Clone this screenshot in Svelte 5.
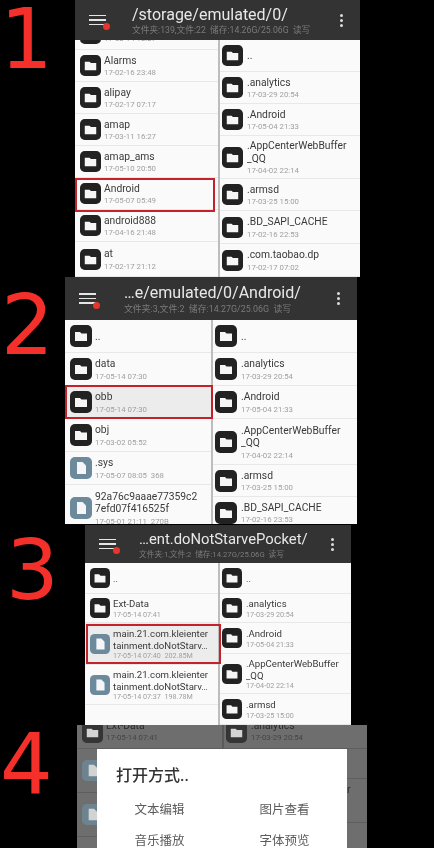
<script>
  const steps = [
    {
      n: 1,
      title: '/storage/emulated/0/',
      sub: '文件夹:139,文件:22  储存:14.26G/25.06G  读写',
      left: [
        { h: 10, name: '', date: '17-03-14 13:37', cut: true },
        { h: 32, name: 'Alarms', date: '17-02-16 23:48' },
        { h: 32, name: 'alipay', date: '17-02-17 07:17' },
        { h: 32, name: 'amap', date: '17-03-11 16:27' },
        { h: 32, name: 'amap_ams', date: '17-05-10 20:50' },
        { h: 32, name: 'Android', date: '17-05-07 05:49', box: true },
        { h: 32, name: 'android888', date: '17-04-16 21:48' },
        { h: 35, name: 'at', date: '17-02-17 21:12' }
      ],
      right: [
        { h: 32, name: '..', date: '' },
        { h: 32, name: '.analytics', date: '17-03-29 20:54' },
        { h: 32, name: '.Android', date: '17-05-04 21:33' },
        { h: 43, name: '.AppCenterWebBuffer\n_QQ', date: '17-04-02 22:14' },
        { h: 32, name: '.armsd', date: '17-03-25 15:00' },
        { h: 33, name: '.BD_SAPI_CACHE', date: '17-02-16 22:53' },
        { h: 33, name: '.com.taobao.dp', date: '17-02-17 07:02' }
      ]
    },
    {
      n: 2,
      title: '…e/emulated/0/Android/',
      sub: '文件夹:3,文件:2  储存:14.27G/25.06G  读写',
      left: [
        { h: 33, name: '..', date: '' },
        { h: 33, name: 'data', date: '17-05-14 07:30' },
        { h: 33, name: 'obb', date: '17-05-14 07:30', box: true, on: true },
        { h: 33, name: 'obj', date: '17-03-02 05:52' },
        { h: 33, name: '.sys', date: '17-05-07 08:05  368', file: true },
        { h: 46, name: '92a76c9aaae77359c2\n7efd07f416525f', date: '17-05-01 21:11  270B', file: true }
      ],
      right: [
        { h: 33, name: '..', date: '' },
        { h: 33, name: '.analytics', date: '17-03-29 20:54' },
        { h: 33, name: '.Android', date: '17-05-04 21:33' },
        { h: 46, name: '.AppCenterWebBuffer\n_QQ', date: '17-04-02 22:14' },
        { h: 32, name: '.armsd', date: '17-03-25 15:00' },
        { h: 32, name: '.BD_SAPI_CACHE', date: '17-02-16 23:53' }
      ]
    },
    {
      n: 3,
      title: '…ent.doNotStarvePocket/',
      sub: '文件夹:1,文件:2  储存:14.27G/25.06G  读写',
      left: [
        { h: 31, name: '..', date: '' },
        { h: 29, name: 'Ext-Data', date: '17-05-14 07:41' },
        { h: 42, name: 'main.21.com.kleienter\ntainment.doNotStarv…', date: '17-05-14 07:40  202.85M', file: true, box: true, on: true },
        { h: 40, name: 'main.21.com.kleienter\ntainment.doNotStarv…', date: '17-05-14 07:37  198.78M', file: true }
      ],
      right: [
        { h: 31, name: '..', date: '' },
        { h: 29, name: '.analytics', date: '17-03-29 20:54' },
        { h: 31, name: '.Android', date: '17-05-04 21:33' },
        { h: 40, name: '.AppCenterWebBuffer\n_QQ', date: '17-04-02 22:14' },
        { h: 31, name: '.armsd', date: '17-03-25 15:00' }
      ]
    }
  ];

  const behind = {
    left: [
      { h: 24, name: 'Ext-Data', date: '17-05-14 07:41', cut: true },
      { h: 44, name: '', date: '', file: true },
      { h: 44, name: '', date: '', file: true }
    ],
    right: [
      { h: 24, name: '.analytics', date: '17-03-29 20:54', cut: true },
      { h: 30, name: '.Android', date: '17-05-04 21:33' },
      { h: 44, name: '.AppCenterWebBuffer\n_QQ', date: '17-04-02 22:14' }
    ]
  };

  const openers = ['文本编辑', '图片查看', '音乐播放', '字体预览'];
</script>

{#snippet icon(file)}
  <svg class="icon" viewBox="0 0 22 22" aria-hidden="true">
    <rect width="22" height="22" rx="5" fill={file ? '#6d8a9c' : '#222'} />
    {#if file}
      <path d="M7 5h5.500L16 8.500V17H7z" fill="#f4f6f7" />
    {:else}
      <path d="M5 7h5l1.500 1.500H17V16H5z" fill="#f6f6f6" />
    {/if}
  </svg>
{/snippet}

{#snippet column(rows, cls)}
  <ul class="col {cls}">
    {#each rows as row}
      <li class="row" class:cut={row.cut} class:on={row.on} class:box={row.box} style:height="{row.h}px">
        {@render icon(row.file)}
        <div class="text">
          <span class="name">{row.name}</span>
          {#if row.date}<span class="date">{row.date}</span>{/if}
        </div>
      </li>
    {/each}
  </ul>
{/snippet}

<main>
  {#each steps as step}
    <section class="step s{step.n}">
      <div class="num">{step.n}</div>
      <div class="screen">
        <header>
          <span class="menu"><i></i><i></i><i></i><b></b></span>
          <div class="path">
            <h1>{step.title}</h1>
            <p>{step.sub}</p>
          </div>
          <span class="more"><i></i><i></i><i></i></span>
        </header>
        <div class="lists">
          {@render column(step.left, 'left')}
          {@render column(step.right, 'right')}
        </div>
      </div>
    </section>
  {/each}

  <section class="step s4">
    <div class="num">4</div>
    <div class="screen">
      <div class="lists">
        {@render column(behind.left, 'left')}
        {@render column(behind.right, 'right')}
      </div>
      <div class="dialog">
        <h2>打开方式..</h2>
        <div class="openers">
          {#each openers as label}
            <span>{label}</span>
          {/each}
        </div>
      </div>
    </div>
  </section>
</main>

<style>
  :global(body) {
    background: #000;
  }

  main {
    width: 434px;
    height: 848px;
    overflow: hidden;
    background: #000;
    font-family: Roboto, "Noto Sans CJK SC", sans-serif;
  }

  .step {
    display: flex;
    align-items: flex-start;
  }

  .s1 { height: 277px; }
  .s2 { height: 248px; }
  .s3 { height: 200px; }
  .s4 { height: 123px; }

  .num {
    flex: none;
    box-sizing: border-box;
    color: #f5302a;
    font-family: "DejaVu Sans", sans-serif;
    font-size: 83px;
    line-height: 80px;
    font-weight: 400;
    filter: blur(0.3px);
  }

  .s1 .num { width: 75px; }
  .s2 .num { width: 65px; padding: 9px 0 0 1px; }
  .s3 .num { width: 85px; padding: 6px 0 0 6px; }
  .s4 .num { width: 77px; }

  .screen {
    position: relative;
    display: flex;
    flex-direction: column;
    overflow: hidden;
    filter: blur(0.6px);
  }

  .s1 .screen { width: 285px; height: 277px; }
  .s2 .screen { width: 292px; height: 247px; }
  .s3 .screen { width: 266px; height: 200px; }
  .s4 .screen { width: 290px; height: 123px; background: #6e6e6e; }

  header {
    flex: none;
    display: flex;
    align-items: center;
    background: #333;
    color: #e8e8e8;
  }

  .s1 header { height: 40px; }
  .s2 header { height: 43px; }
  .s3 header { height: 38px; }

  .menu {
    position: relative;
    display: grid;
    gap: 3px;
    width: 17px;
    margin-left: 14px;
  }

  .menu i {
    height: 1.500px;
    background: #e6e6e6;
  }

  .menu b {
    position: absolute;
    right: -4px;
    bottom: -5px;
    width: 7px;
    height: 7px;
    border-radius: 50%;
    background: #e8352c;
  }

  .path {
    flex: 1;
    min-width: 0;
    padding-left: 26px;
  }

  .s2 .path { padding-left: 28px; }
  .s3 .path { padding-left: 23px; }

  h1 {
    margin: 0;
    font-size: 16px;
    font-weight: 400;
    line-height: 20px;
    white-space: nowrap;
  }

  .s3 h1 { font-size: 14.800px; }

  .path p {
    margin: 0;
    color: #7b7b7b;
    font-size: 8.700px;
    line-height: 11px;
    white-space: pre;
  }

  .s2 .path p { margin-top: 1px; font-size: 8.900px; }
  .s3 .path p { font-size: 7.700px; }

  .more {
    display: grid;
    gap: 2px;
    margin-right: 17px;
  }

  .more i {
    width: 3px;
    height: 3px;
    border-radius: 50%;
    background: #ddd;
  }

  .lists {
    flex: 1;
    min-height: 0;
    display: flex;
    overflow: hidden;
  }

  .col {
    margin: 0;
    padding: 0;
    list-style: none;
    background: #fafafa;
  }

  .left {
    flex: none;
    border-right: 2px solid #bdbdbd;
  }

  .right {
    flex: 1;
    min-width: 0;
  }

  .s1 .left { width: 143px; }
  .s2 .left { width: 146px; }
  .s3 .left { width: 133px; }
  .s4 .left { width: 145px; }

  .s4 .col { background: #6e6e6e; }
  .s4 .left { border-color: #5a5a5a; }

  .row {
    position: relative;
    display: flex;
    align-items: center;
    gap: 3px;
    padding-left: 5px;
    overflow: hidden;
    box-sizing: border-box;
    border-bottom: 1px solid #e8e8e8;
  }

  .right .row { padding-left: 2px; gap: 4px; }

  .s4 .row { border-color: #5e5e5e; }

  .row.on { background: #ececec; }

  .row.box {
    overflow: visible;
    z-index: 1;
  }

  .row.box::after {
    content: '';
    position: absolute;
    top: 0;
    bottom: 0;
    left: 0;
    right: 0;
    border: 2px solid #c4222a;
  }

  .s1 .row.box::after { right: 3px; bottom: -3px; }
  .s2 .row.box::after { right: -2px; bottom: -1px; top: -1px; }
  .s3 .row.box::after { right: -3px; left: 1px; top: 1px; }

  .row.cut { align-items: flex-end; padding-bottom: 5px; }

  .icon {
    flex: none;
    width: 21px;
    height: 21px;
  }

  .s2 .icon { width: 22px; height: 22px; }
  .s3 .icon { width: 20px; height: 20px; }
  .s4 .icon { opacity: 0.75; }

  .text {
    min-width: 0;
    display: grid;
    margin-top: 2px;
  }

  .name {
    color: #3a3a3a;
    font-size: 10.300px;
    line-height: 12.500px;
    white-space: pre;
  }

  .date {
    color: #a0a0a0;
    font-size: 7.800px;
    line-height: 11px;
    white-space: pre;
  }

  .s3 .name { font-size: 9.600px; line-height: 11.500px; }
  .s3 .date { font-size: 7.200px; line-height: 10px; }

  .s4 .name { color: #2c2c2c; }
  .s4 .date { color: #444; }

  .dialog {
    position: absolute;
    top: 24px;
    left: 20px;
    width: 250px;
    height: 130px;
    background: #fff;
    box-sizing: border-box;
    padding: 17px 0 0 19px;
  }

  h2 {
    margin: 0;
    color: #333;
    font-size: 16px;
    font-weight: 500;
    line-height: 20px;
  }

  .openers {
    display: grid;
    grid-template-columns: 125px 125px;
    row-gap: 13px;
    margin: 15px 0 0 -19px;
    color: #5c5c5c;
    font-size: 12.500px;
    line-height: 18px;
    text-align: center;
  }
</style>
